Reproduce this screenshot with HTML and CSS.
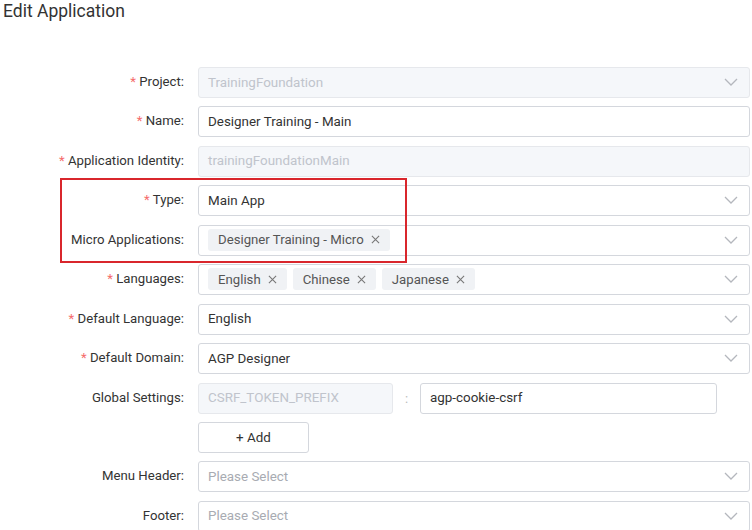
FILE: index.html
```html
<!DOCTYPE html>
<html>
<head>
<meta charset="utf-8">
<link rel="stylesheet" href="styles.css">
</head>
<body>
<div class="page">
  <h1 class="title">Edit Application</h1>
  <div class="form">
    <div class="row">
      <label class="label"><span class="req">*</span> Project:</label>
      <div class="field select disabled"><span class="val">TrainingFoundation</span><svg class="chev" viewBox="0 0 14 8"><path d="M1 1l6 6 6-6" /></svg></div>
    </div>
    <div class="row">
      <label class="label"><span class="req">*</span> Name:</label>
      <div class="field"><span class="val dark">Designer Training - Main</span></div>
    </div>
    <div class="row">
      <label class="label"><span class="req">*</span> Application Identity:</label>
      <div class="field disabled"><span class="val">trainingFoundationMain</span></div>
    </div>
    <div class="row">
      <label class="label"><span class="req">*</span> Type:</label>
      <div class="field select"><span class="val dark">Main App</span><svg class="chev" viewBox="0 0 14 8"><path d="M1 1l6 6 6-6" /></svg></div>
    </div>
    <div class="row">
      <label class="label">Micro Applications:</label>
      <div class="field select tags"><span class="tag">Designer Training - Micro<svg class="x" viewBox="0 0 10 10"><path d="M1 1l8 8M9 1l-8 8"/></svg></span><svg class="chev" viewBox="0 0 14 8"><path d="M1 1l6 6 6-6" /></svg></div>
    </div>
    <div class="row">
      <label class="label"><span class="req">*</span> Languages:</label>
      <div class="field select tags"><span class="tag">English<svg class="x" viewBox="0 0 10 10"><path d="M1 1l8 8M9 1l-8 8"/></svg></span><span class="tag">Chinese<svg class="x" viewBox="0 0 10 10"><path d="M1 1l8 8M9 1l-8 8"/></svg></span><span class="tag">Japanese<svg class="x" viewBox="0 0 10 10"><path d="M1 1l8 8M9 1l-8 8"/></svg></span><svg class="chev" viewBox="0 0 14 8"><path d="M1 1l6 6 6-6" /></svg></div>
    </div>
    <div class="row">
      <label class="label"><span class="req">*</span> Default Language:</label>
      <div class="field select"><span class="val dark">English</span><svg class="chev" viewBox="0 0 14 8"><path d="M1 1l6 6 6-6" /></svg></div>
    </div>
    <div class="row">
      <label class="label"><span class="req">*</span> Default Domain:</label>
      <div class="field select"><span class="val dark">AGP Designer</span><svg class="chev" viewBox="0 0 14 8"><path d="M1 1l6 6 6-6" /></svg></div>
    </div>
    <div class="row">
      <label class="label">Global Settings:</label>
      <div class="pair">
        <div class="field disabled key"><span class="val">CSRF_TOKEN_PREFIX</span></div>
        <span class="colon">:</span>
        <div class="field value"><span class="val dark">agp-cookie-csrf</span></div>
      </div>
    </div>
    <div class="row">
      <span class="label"></span>
      <button class="add">+ Add</button>
    </div>
    <div class="row">
      <label class="label">Menu Header:</label>
      <div class="field select"><span class="val ph">Please Select</span><svg class="chev" viewBox="0 0 14 8"><path d="M1 1l6 6 6-6" /></svg></div>
    </div>
    <div class="row">
      <label class="label">Footer:</label>
      <div class="field select"><span class="val ph">Please Select</span><svg class="chev" viewBox="0 0 14 8"><path d="M1 1l6 6 6-6" /></svg></div>
    </div>
    <div class="highlight"></div>
  </div>
</div>
</body>
</html>
```
FILE: styles.css
```css
html, body {
  margin: 0;
  padding: 0;
  background: #fff;
  font-family: Roboto, "Liberation Sans", Arial, sans-serif;
  color: #333;
  overflow: hidden;
}
.page {
  padding: 0 2px 0 3px;
}
.title {
  margin: 0;
  font-size: 17.5px;
  font-weight: 400;
  line-height: 22px;
  color: #333;
  height: 67px;
}
.form {
  position: relative;
  display: flex;
  flex-direction: column;
  gap: 8.45px;
}
.row {
  display: flex;
  align-items: center;
  height: 31px;
}
.label {
  width: 181px;
  flex: none;
  text-align: right;
  font-size: 13.2px;
  line-height: 16px;
  padding-bottom: 1px;
  color: #333;
  padding-right: 14px;
}
.req {
  color: #f56c6c;
}
.field {
  flex: 1;
  height: 31px;
  box-sizing: border-box;
  border: 1px solid #d4d7dd;
  border-radius: 3px;
  background: #fff;
  display: flex;
  align-items: center;
  padding: 0 10px 1px 9px;
  font-size: 13.4px;
  min-width: 0;
}
.field.disabled {
  background: #f5f7fa;
  border-color: #e6e8ec;
}
.val {
  flex: 1;
  color: #c0c4cc;
  white-space: nowrap;
}
.val.dark { color: #333; }
.val.ph { color: #a8abb2; }
.chev {
  width: 14px;
  height: 8px;
  flex: none;
  margin-right: 1px;
}
.chev path {
  fill: none;
  stroke: #b4b7bd;
  stroke-width: 1.3;
}
.tags {
  gap: 6px;
}
.tags .chev { margin-left: auto; }
.tag {
  display: inline-flex;
  align-items: center;
  height: 22px;
  background: #f0f2f5;
  border-radius: 3px;
  padding: 0 10px 0 10px;
  font-size: 13.2px;
  color: #555;
  white-space: nowrap;
}
.x {
  width: 9px;
  height: 9px;
  margin-left: 7px;
}
.x path {
  stroke: #777;
  stroke-width: 1.2;
  fill: none;
}
.pair {
  display: flex;
  align-items: center;
  flex: 1;
}
.field.key {
  flex: none;
  width: 195px;
}
.colon {
  width: 27px;
  text-align: center;
  color: #bbb;
  font-size: 13px;
}
.field.value {
  flex: none;
  width: 297px;
}
.add {
  width: 111px;
  height: 31px;
  box-sizing: border-box;
  border: 1px solid #d4d7dd;
  border-radius: 3px;
  background: #fff;
  font-family: inherit;
  font-size: 13.4px;
  color: #333;
  padding: 0;
}
.highlight {
  position: absolute;
  left: 57px;
  top: 111px;
  width: 347px;
  height: 85px;
  box-sizing: border-box;
  border: 2px solid #d9262c;
  pointer-events: none;
}
```
